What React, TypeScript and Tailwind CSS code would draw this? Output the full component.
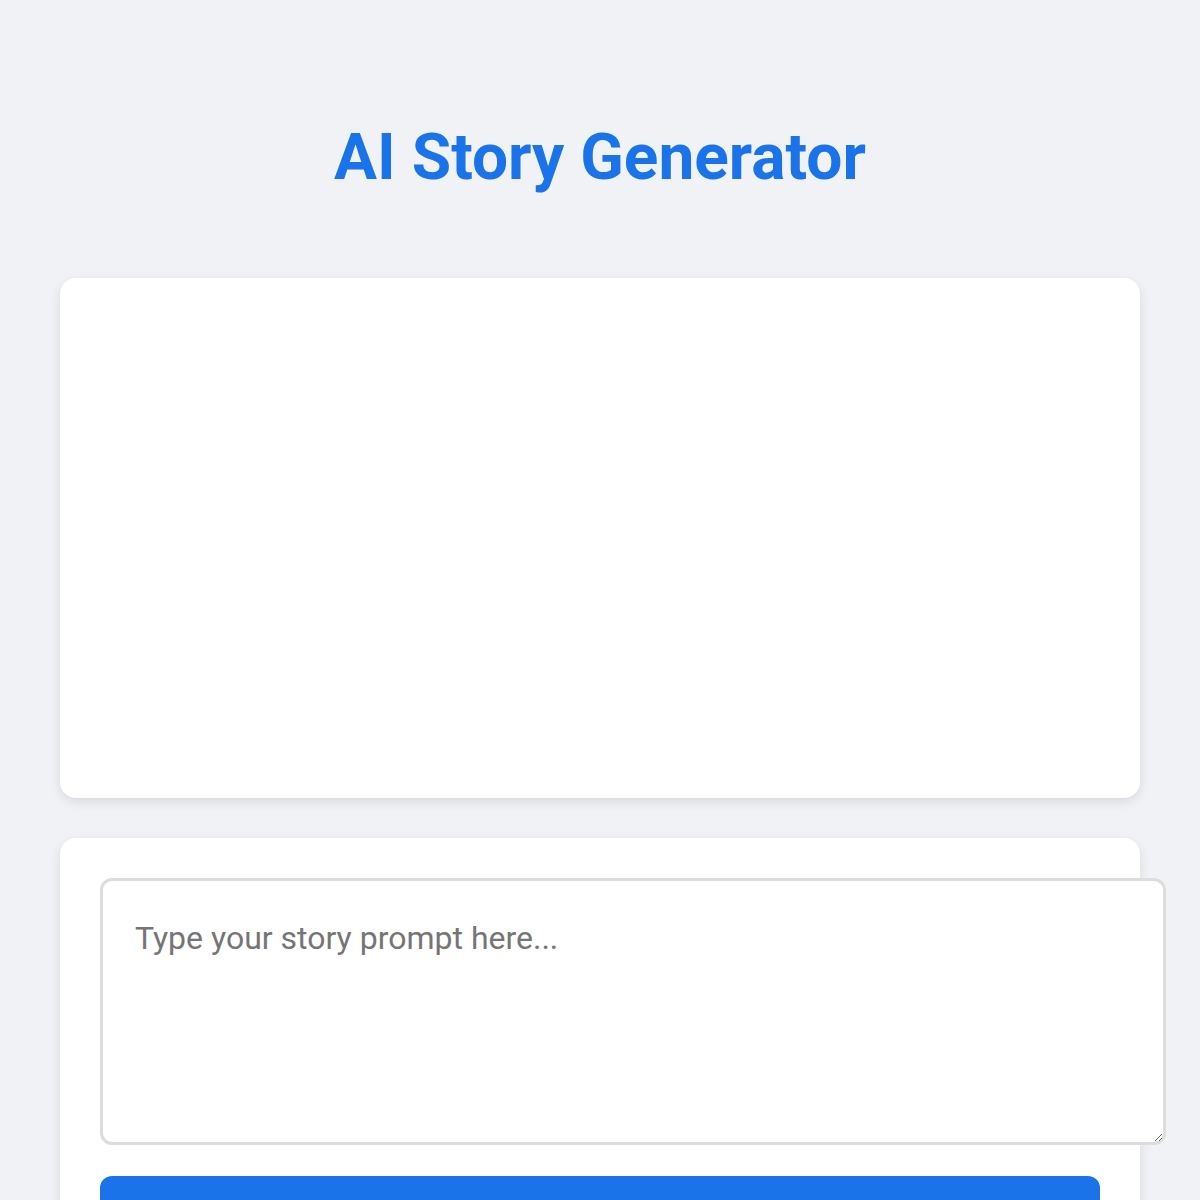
import React from 'react';

const App: React.FC = () => {
  return (
    <div className="min-h-screen bg-[#f0f2f5] font-['Roboto',sans-serif]">
      <div className="mx-auto w-[1080px] pt-[120px] pb-10">
        {/* Title */}
        <h1 className="text-center text-[64px] font-bold leading-[76px] text-[#1a73e8] mb-[82px]">
          AI Story Generator
        </h1>

        {/* Story output */}
        <div className="h-[520px] rounded-2xl bg-white shadow-[0_4px_12px_rgba(0,0,0,0.1)]" />

        {/* Prompt input */}
        <div className="mt-10 rounded-2xl bg-white p-10 shadow-[0_4px_12px_rgba(0,0,0,0.1)]">
          <textarea
            placeholder="Type your story prompt here..."
            className="block h-[267px] w-[1066px] box-border resize-y rounded-xl border-[3px] border-[#dddddd] bg-white px-[32px] pt-[36px] text-[32px] leading-[42px] text-[#333] placeholder:text-[#757575] outline-none"
          />
          <button className="mt-[31px] h-[76px] w-full rounded-xl bg-[#1a73e8] text-[24px] font-medium text-white">
            Generate Story
          </button>
        </div>
      </div>
    </div>
  );
};

export default App;
